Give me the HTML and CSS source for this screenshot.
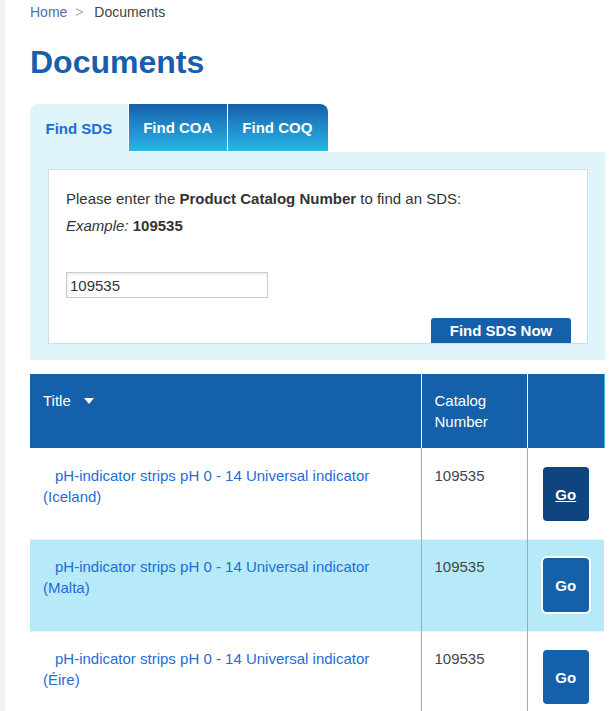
FILE: index.html
```html
<!DOCTYPE html>
<html lang="en">
<head>
<meta charset="utf-8">
<title>Documents</title>
<link rel="stylesheet" href="styles.css">
</head>
<body>
<div class="page">
  <div class="side"></div>
  <main class="main">
    <nav class="crumbs">
      <a class="crumb-link" href="#">Home</a>
      <span class="crumb-sep">&gt;</span>
      <span class="crumb-current">Documents</span>
    </nav>
    <h1 class="title">Documents</h1>

    <div class="tabs">
      <div class="tab tab-active">Find SDS</div>
      <div class="tab">Find COA</div>
      <div class="tab tab-last">Find COQ</div>
    </div>
    <div class="panel">
      <div class="box">
        <p class="line">Please enter the <b>Product Catalog Number</b> to find an SDS:</p>
        <p class="line line-ex"><i>Example:</i> <b>109535</b></p>
        <input class="field" type="text" value="109535">
        <div class="actions"><button class="find-btn">Find SDS Now</button></div>
      </div>
    </div>

    <table class="docs">
      <colgroup>
        <col class="c-title">
        <col class="c-num">
        <col class="c-go">
      </colgroup>
      <thead>
        <tr>
          <th class="h-title">Title <span class="arrow"></span></th>
          <th>Catalog Number</th>
          <th></th>
        </tr>
      </thead>
      <tbody>
        <tr class="row-first">
          <td><a class="doc-link" href="#">pH-indicator strips pH 0 - 14 Universal indicator (Iceland)</a></td>
          <td class="num">109535</td>
          <td class="go-cell"><a class="go go-hover" href="#">Go</a></td>
        </tr>
        <tr class="row-hl">
          <td><a class="doc-link" href="#">pH-indicator strips pH 0 - 14 Universal indicator (Malta)</a></td>
          <td class="num">109535</td>
          <td class="go-cell"><a class="go go-focus" href="#">Go</a></td>
        </tr>
        <tr>
          <td><a class="doc-link" href="#">pH-indicator strips pH 0 - 14 Universal indicator (Éire)</a></td>
          <td class="num">109535</td>
          <td class="go-cell"><a class="go" href="#">Go</a></td>
        </tr>
      </tbody>
    </table>
  </main>
</div>
</body>
</html>
```

FILE: styles.css
```css
html, body {
  margin: 0;
  padding: 0;
  overflow: hidden;
  background: #ffffff;
}
body {
  font-family: "Liberation Sans", Arial, sans-serif;
  color: #333333;
}
.page {
  display: flex;
  min-height: 711px;
}
.side {
  width: 5px;
  flex: none;
  background: #f2f2f2;
}
.main {
  padding-left: 25px;
  width: 575px;
}
.crumbs {
  padding-top: 4px;
  font-size: 14px;
  line-height: 16px;
}
.crumb-link {
  color: #4f6fae;
  text-decoration: none;
}
.crumb-sep {
  color: #b0b0b0;
  margin: 0 7px 0 4px;
}
.crumb-current {
  color: #444444;
}
.title {
  margin: 23px 0 0 0;
  font-size: 32px;
  line-height: 38px;
  font-weight: bold;
  color: #1660ab;
}
.tabs {
  display: flex;
  margin-top: 23px;
  height: 48px;
}
.tab {
  display: flex;
  align-items: center;
  padding: 0 14.5px;
  font-size: 15px;
  font-weight: bold;
  color: #ffffff;
  background: linear-gradient(#1660ab, #2ab6e9);
  border-left: 1px solid #ffffff;
  border-bottom: 1px solid #ffffff;
}
.tab-active {
  background: #dff4fb;
  color: #1b6dd4;
  border-left: none;
  border-bottom: none;
  border-top-left-radius: 8px;
  padding: 0 15.5px 0 15.5px;
}
.tab-last {
  border-top-right-radius: 8px;
  padding-right: 15.5px;
}
.panel {
  background: #dff4fb;
  padding: 17px 17px 16px 18px;
}
.box {
  background: #ffffff;
  border: 1px solid #cddfe7;
  padding: 19px 0 0 17px;
}
.line {
  margin: 0;
  font-size: 15px;
  line-height: 20px;
  color: #333333;
}
.line-ex {
  margin-top: 7px;
}
.field {
  display: block;
  margin-top: 36px;
  box-sizing: border-box;
  width: 202px;
  height: 26px;
  padding: 0 3px;
  border: 1px solid #cccccc;
  box-shadow: inset 1px 2px 3px rgba(0, 0, 0, 0.08);
  font-family: "Liberation Sans", Arial, sans-serif;
  font-size: 15px;
  color: #333333;
  background: #ffffff;
}
.actions {
  display: flex;
  justify-content: flex-end;
  margin-top: 20px;
  padding-right: 16px;
}
.find-btn {
  width: 140px;
  height: 25px;
  border: none;
  border-radius: 3px 3px 0 0;
  background: #1460aa;
  color: #ffffff;
  font-family: "Liberation Sans", Arial, sans-serif;
  font-size: 15px;
  font-weight: bold;
  padding: 0;
}
.docs {
  margin-top: 14px;
  width: 574px;
  border-collapse: collapse;
  table-layout: fixed;
  font-size: 15px;
}
.c-title { width: 391px; }
.c-num { width: 106px; }
.c-go { width: 77px; }
.docs th {
  background: #1460aa;
  color: #ffffff;
  font-weight: normal;
  text-align: left;
  vertical-align: top;
  padding: 16px 13px 16px 13px;
  line-height: 21px;
  height: 42px;
  border-left: 1px solid #ffffff;
}
.docs th:first-child {
  border-left: none;
}
.docs th:last-child {
  border-right: 1px solid #3bb4e6;
}
.arrow {
  display: inline-block;
  width: 0;
  height: 0;
  margin-left: 9px;
  border-left: 5px solid transparent;
  border-right: 5px solid transparent;
  border-top: 6px solid #ffffff;
  vertical-align: 2px;
}
.docs td {
  vertical-align: top;
  padding: 16px 13px 0 13px;
  height: 75px;
  line-height: 21px;
  border-left: 1px solid #8eadd6;
  border-top: 1px solid #e3f5fb;
}
.docs td:first-child {
  border-left: none;
}
.docs .row-first td {
  border-top: none;
  height: 74px;
  padding-top: 17px;
}
.docs .row-first td.go-cell {
  padding-top: 19px;
  height: 72px;
}
.row-hl td {
  background: #b6eaf9;
}
.doc-link {
  display: block;
  text-indent: 12px;
  color: #1f6dd6;
  text-decoration: none;
}
.num {
  color: #444444;
}
.docs td.go-cell {
  padding: 18px 0 0 0;
  height: 73px;
  text-align: center;
}
.go {
  display: inline-flex;
  align-items: center;
  justify-content: center;
  width: 46px;
  height: 54px;
  border-radius: 4px;
  background: #1460aa;
  color: #ffffff;
  font-weight: bold;
  font-size: 15px;
  text-decoration: none;
}
.go-hover {
  background: #0f447f;
  text-decoration: underline;
}
.go-focus {
  box-shadow: 0 0 0 2px #ffffff;
}
```
